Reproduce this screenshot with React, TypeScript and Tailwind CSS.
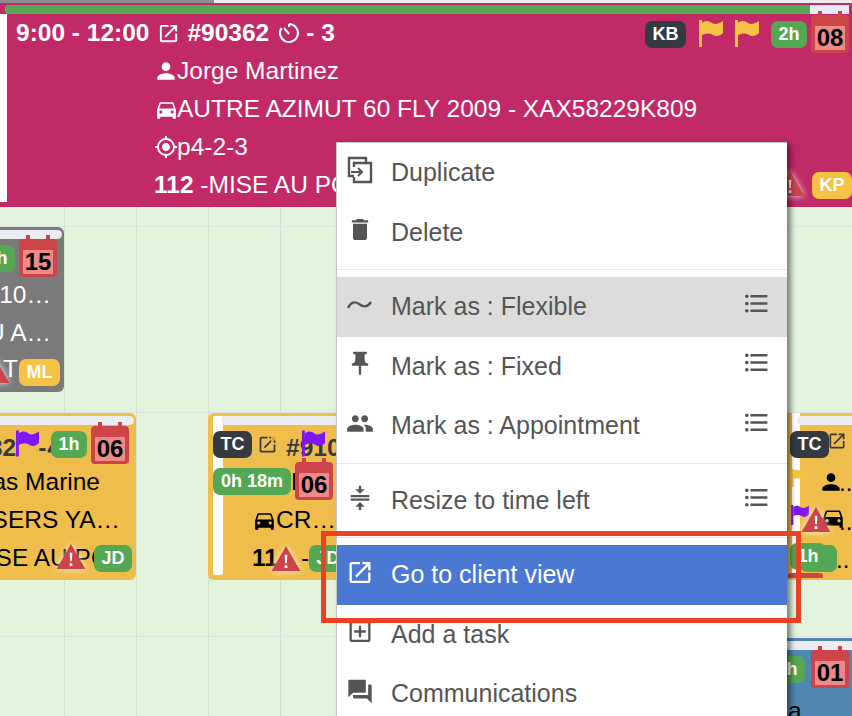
import type { ReactNode } from "react";
import {
  MdCompress,
  MdDelete,
  MdDirectionsCar,
  MdForum,
  MdFormatListBulleted,
  MdGpsFixed,
  MdOpenInNew,
  MdOutlineAddBox,
  MdPeople,
  MdPerson,
  MdPushPin,
} from "react-icons/md";

function Flag({ color, className }: { color: string; className: string }) {
  return (
    <svg viewBox="0 0 24 27" className={`shrink-0 ${className}`} fill={color}>
      <path d="M0 0h3v27H0z" />
      <path d="M3 3c4-3 7-2 10 0s6 1 11-2v12c-3 3-7 4-10 2s-7-2-11 0z" />
    </svg>
  );
}

function Warn({ className }: { className: string }) {
  return (
    <svg viewBox="0 0 30 27" className={`h-[26px] w-[30px] shrink-0 drop-shadow-[0_0_3px_rgba(255,255,255,0.9)] ${className}`}>
      <path d="M15 0 30 26H0z" fill="#cb4449" />
      <path d="M13.6 9h2.8l-.5 9h-1.8zM13.6 20h2.8v2.8h-2.8z" fill="#fff" />
    </svg>
  );
}

function Badge({ text, color, className }: { text: string; color: string; className: string }) {
  return (
    <div className={`flex h-[27px] shrink-0 items-center justify-center rounded-[7px] text-[18px] font-bold text-white ${color} ${className}`}>
      {text}
    </div>
  );
}

function CalendarDay({ day }: { day: string }) {
  return (
    <div className="relative h-[38px] w-[38px] shrink-0 rounded-[4px] bg-[#cb454b]">
      <div className="absolute -top-[4px] left-[7px] h-[5px] w-[4px] bg-[#cb454b]" />
      <div className="absolute -top-[4px] right-[7px] h-[5px] w-[4px] bg-[#cb454b]" />
      <div className="absolute inset-x-[4px] top-[11px] bottom-[3px] flex items-center justify-center bg-[#ef8a86] text-[24px] font-bold text-black">
        {day}
      </div>
    </div>
  );
}

function Line({ children, end }: { children: ReactNode; end: string }) {
  return (
    <div className={`flex h-[38px] items-center justify-end whitespace-nowrap ${end}`}>{children}</div>
  );
}

function DetailIcon({ children }: { children: ReactNode }) {
  return <span className="flex w-[22px] shrink-0 justify-center">{children}</span>;
}

function MenuRow({
  icon,
  label,
  list,
  className = "text-[#555]",
}: {
  icon: ReactNode;
  label: string;
  list?: boolean;
  className?: string;
}) {
  return (
    <div className={`flex h-[59.5px] items-center pl-[9px] pr-[16px] text-[25px] ${className}`}>
      <span className="-mt-[5px] flex w-[28px] justify-center">{icon}</span>
      <span className="ml-[17px] flex-1">{label}</span>
      {list && <MdFormatListBulleted className="-mt-[7px] text-[29px]" />}
    </div>
  );
}

export default function App() {
  return (
    <div className="relative h-[716px] w-[852px] overflow-hidden bg-[#e2f3dc] font-['Liberation_Sans',Arial,sans-serif]">
      {/* calendar grid */}
      <div className="absolute inset-0 flex pl-[64px]">
        <div className="w-[72px] border-l border-dotted border-[#c5d4c2]" />
        <div className="w-[72px] border-l border-dotted border-[#c5d4c2]" />
        <div className="w-[72px] border-l border-dotted border-[#c5d4c2]" />
        <div className="w-[72px] border-l border-[#cfdccc]" />
      </div>
      <div className="absolute inset-0 flex flex-col pt-[226px]">
        <div className="h-[186px] border-t border-[#dfe2e6]" />
        <div className="h-[224px] border-t border-[#dfe2e6]" />
        <div className="border-t border-[#dfe2e6]" />
      </div>

      {/* top bar */}
      <div className="absolute inset-x-0 top-0 flex h-[3px]">
        <div className="w-[214px] bg-[#8d8d8d]" />
        <div className="flex-1 bg-[#ececec]" />
      </div>

      {/* selected job */}
      <div className="absolute left-0 top-[3px] h-[2px] w-full bg-[#c22967]" />
      <div className="absolute left-0 top-[5px] h-[202px] w-[852px] bg-[#c22967] text-[24.5px] text-white">
        <div className="absolute left-0 top-[9px] h-[188px] w-[7px] bg-white" />
        <div className="absolute left-[5px] right-[3px] top-0 h-[9px] rounded-l-full bg-[#eaebf0]">
          <div className="h-full w-[805px] rounded-l-full bg-[#54a854]" />
        </div>
        <div className="relative flex h-[47px] items-start pr-[3px] pt-[10px]">
          <div className="mt-[4px] flex h-[28px] items-center gap-[7.5px] pl-[16px] font-bold">
            <span>9:00 - 12:00</span>
            <MdOpenInNew className="text-[23px]" />
            <span>#90362</span>
            <svg viewBox="0 0 24 24" className="h-[24px] w-[24px]" fill="none" stroke="#fff" strokeWidth="2">
              <path d="M12 3a9 9 0 1 1-7.5 4" />
              <path d="M12 13 7 7M12 3v3" />
            </svg>
            <span className="-ml-[2px]">- 3</span>
          </div>
          <div className="ml-auto flex items-start">
            <Badge text="KB" color="mt-[6px] bg-[#343a40]" className="w-[41px]" />
            <Flag color="#f6c244" className="ml-[13px] mt-[5px] h-[27px] w-[24px]" />
            <Flag color="#f6c244" className="ml-[12px] mt-[5px] h-[27px] w-[24px]" />
            <Badge text="2h" color="mt-[6px] bg-[#54a854]" className="ml-[12px] w-[36px]" />
            <div className="ml-[4px]">
              <CalendarDay day="08" />
            </div>
          </div>
        </div>
        <div className="flex h-[38px] items-center pl-[155px]">
          <DetailIcon>
            <MdPerson className="shrink-0 text-[26px]" />
          </DetailIcon>
          Jorge Martinez
        </div>
        <div className="flex h-[38px] items-center pl-[155px]">
          <DetailIcon>
            <MdDirectionsCar className="shrink-0 text-[25px]" />
          </DetailIcon>
          AUTRE AZIMUT 60 FLY 2009 - XAX58229K809
        </div>
        <div className="flex h-[38px] items-center pl-[155px]">
          <DetailIcon>
            <MdGpsFixed className="shrink-0 text-[24px]" />
          </DetailIcon>
          p4-2-3
        </div>
        <div className="flex h-[38px] items-center whitespace-nowrap pl-[154px]">
          <b>112</b>&nbsp;-MISE AU POINT
          <div className="ml-auto flex items-center gap-[7px]">
            <Warn className="-mt-[2px]" />
            <Badge text="KP" color="bg-[#f6c244]" className="w-[40px]" />
          </div>
        </div>
      </div>

      {/* gray job */}
      <div className="absolute left-0 top-[227px] h-[165px] w-[64px] overflow-hidden rounded-r-[6px] bg-[#7a7a7a] text-[24.5px] text-white">
        <div className="absolute left-0 right-[2px] top-[3px] h-[9px] rounded-r-full bg-[#ebecf0]" />
        <div className="flex items-start justify-end gap-[4px] pr-[7px] pt-[12px]">
          <Badge text="1h" color="mt-[6px] bg-[#54a854]" className="w-[36px]" />
          <CalendarDay day="15" />
        </div>
        <div className="-mt-[1px]">
          <Line end="pr-[13px]">10…</Line>
          <Line end="pr-[13px]">U A…</Line>
          <div className="flex h-[38px] items-center justify-end pr-[4px] pt-[2px]">
            <Warn className="-mr-[7px] -mt-[2px]" />
            <span className="-mt-[6px]">T</span>
            <Badge text="ML" color="ml-[1px] bg-[#f6c244]" className="w-[41px]" />
          </div>
        </div>
      </div>

      {/* yellow job, left */}
      <div className="absolute left-0 top-[413px] h-[167px] w-[136px] overflow-hidden rounded-r-[6px] bg-[#efbd4c] text-[24.5px] text-black">
        <div className="absolute left-0 right-[2px] top-[3px] h-[9px] rounded-r-full bg-[#ebecf0]" />
        <div className="flex h-[51px] items-start justify-end pr-[7px] pt-[13px]">
          <div className="-mr-[10px] mt-[4px] flex whitespace-nowrap font-bold text-[#343a40]">
            <span>32</span>
            <span className="ml-[22px]">-</span>
            <span className="ml-[1px]">4</span>
          </div>
          <Badge text="1h" color="mt-[5px] bg-[#54a854]" className="w-[36px]" />
          <div className="ml-[4px]">
            <CalendarDay day="06" />
          </div>
        </div>
        <Flag color="#7f16f5" className="absolute left-[16px] top-[17px] h-[27px] w-[23px]" />
        <div className="-mt-[1px]">
          <Line end="pr-[36px]">as Marine</Line>
          <Line end="pr-[16px]">SERS YA…</Line>
          <Line end="pr-[26px]">SE AU PO</Line>
        </div>
        <Warn className="absolute left-[56px] top-[131px]" />
        <Badge text="JD" color="absolute bg-[#54a854]" className="right-[4px] top-[132px] w-[38px]" />
      </div>

      {/* yellow job, middle */}
      <div className="absolute left-[208px] top-[413px] h-[167px] w-[140px] overflow-hidden rounded-l-[6px] border-[3px] border-r-0 border-[#efbd4c] bg-[#efbd4c] text-[24.5px] text-black">
        <div className="absolute left-[2px] top-0 h-[159px] w-[10px] rounded-b-[2px] bg-white" />
        <div className="absolute left-[10px] top-0 h-[9px] w-[130px] rounded-l-full bg-[#ebecf0]" />
        <div className="relative pl-[2px] pt-[15px]">
          <div className="flex h-[27px] items-center">
            <Badge text="TC" color="bg-[#343a40]" className="w-[39px]" />
            <MdOpenInNew className="ml-[5px] shrink-0 text-[21px] text-[#343a40]" />
            <span className="ml-[8px] mt-[7px] whitespace-nowrap font-bold text-[#343a40]">#910</span>
            <Flag color="#f6c244" className="absolute left-[57px] top-[15px] h-[18px] w-[22px] opacity-80" />
            <Flag color="#7f16f5" className="absolute left-[91px] top-[14px] h-[27px] w-[23px]" />
          </div>
          <div className="mt-[4px] flex items-start">
            <Badge text="0h 18m" color="mt-[6px] bg-[#54a854]" className="w-[78px]" />
            <span className="mt-[2px] w-[4px] overflow-hidden">M</span>
            <CalendarDay day="06" />
          </div>
          <div className="mt-[1px] flex h-[38px] items-center pl-[39px]">
            <MdDirectionsCar className="shrink-0 text-[25px]" />
            <span className="ml-[-1px]">CR…</span>
          </div>
          <div className="flex h-[38px] items-center whitespace-nowrap pl-[39px]">
            <b>11</b>
            <Warn className="-ml-[7px]" />
            <span>-</span>
            <Badge text="JD" color="bg-[#54a854]" className="w-[38px]" />
          </div>
        </div>
      </div>

      {/* yellow job, right */}
      <div className="absolute left-[787px] top-[413px] h-[167px] w-[65px] overflow-hidden bg-[#efbd4c] text-[24px] text-black">
        <div className="absolute left-[5px] top-0 h-[160px] w-[8px] bg-white" />
        <div className="absolute left-[10px] right-0 top-[3px] h-[9px] rounded-l-full bg-[#ebecf0]" />
        <MdPerson className="absolute left-[31px] top-[56px] text-[26px]" />
        <MdDirectionsCar className="absolute left-[33px] top-[92px] text-[26px]" />
        <span className="absolute left-[52px] top-[52px]">..</span>
        <span className="absolute left-[52px] top-[91px]">..</span>
        <span className="absolute left-[49px] top-[129px]">..</span>
        <div className="absolute bottom-[2px] left-[1px] h-[5px] w-[35px] rounded-t-[3px] bg-[#cb454b]" />
        <MdOpenInNew className="absolute left-[40px] top-[18px] text-[20px] text-[#343a40]" />
        <Badge text="TC" color="absolute bg-[#343a40]" className="left-[3px] top-[18px] w-[39px]" />
        <Flag color="#f6c244" className="absolute left-[1px] top-[56px] h-[18px] w-[23px]" />
        <Flag color="#7f16f5" className="absolute left-[1px] top-[92px] h-[20px] w-[24px]" />
        <Warn className="absolute left-[14px] top-[94px]" />
        <Badge text="" color="absolute bg-[#54a854]" className="left-[13px] top-[132px] w-[37px]" />
        <Badge text="1h" color="absolute bg-[#54a854]" className="left-[3px] top-[130px] w-[36px]" />
      </div>

      {/* blue job */}
      <div className="absolute left-[787px] top-[638px] h-[78px] w-[65px] overflow-hidden bg-[#5086b0] text-[24.5px] text-black">
        <div className="absolute inset-x-0 top-[3px] h-[9px] bg-[#ebecf0]" />
        <div className="flex items-start justify-end gap-[6px] pr-[3px] pt-[12px]">
          <Badge text="1h" color="mt-[6px] bg-[#54a854]" className="w-[36px]" />
          <CalendarDay day="01" />
        </div>
        <span className="absolute left-[1px] top-[55px]">a</span>
      </div>

      {/* context menu */}
      <div className="absolute left-[336px] top-[142px] w-[451px] border-l border-t border-[#c4c4c4] bg-white shadow-[4px_2px_5px_rgba(0,0,0,0.45)]">
        <MenuRow
          label="Duplicate"
          icon={
            <svg viewBox="0 0 26 28" className="h-[28px] w-[26px]" fill="none" stroke="#555" strokeWidth="2.4">
              <path d="M7 20H2V2h17v5" />
              <path d="M7 11V7h17v19H7v-5" />
              <path d="M4 16h11m-4-4 4 4-4 4" strokeWidth="2" />
            </svg>
          }
        />
        <MenuRow label="Delete" icon={<MdDelete className="text-[29px]" />} />
        <div className="mb-[7px] mt-[7px] border-t border-[#e6e6e6]" />
        <MenuRow
          label="Mark as : Flexible"
          list
          className="bg-[#dcdcdc] text-[#555]"
          icon={
            <svg viewBox="0 0 26 12" className="h-[12px] w-[26px]" fill="none" stroke="#555" strokeWidth="2.4">
              <path d="M1 10c3-6 7-7 11-4s8 4 12-2" />
            </svg>
          }
        />
        <MenuRow label="Mark as : Fixed" list icon={<MdPushPin className="text-[29px]" />} />
        <MenuRow label="Mark as : Appointment" list icon={<MdPeople className="text-[31px]" />} />
        <div className="mb-[7px] mt-[7.5px] border-t border-[#e6e6e6]" />
        <MenuRow label="Resize to time left" list icon={<MdCompress className="text-[29px]" />} />
        <div className="mb-[7px] mt-[6.5px] border-t border-[#e6e6e6]" />
        <MenuRow
          label="Go to client view"
          className="bg-[#4a78d2] text-white"
          icon={<MdOpenInNew className="text-[29px]" />}
        />
        <MenuRow label="Add a task" icon={<MdOutlineAddBox className="text-[29px]" />} />
        <MenuRow label="Communications" icon={<MdForum className="text-[31px]" />} />
      </div>

      {/* callout */}
      <div className="absolute left-[321px] top-[531px] h-[92px] w-[480px] border-[5px] border-[#ee4024]" />
    </div>
  );
}
